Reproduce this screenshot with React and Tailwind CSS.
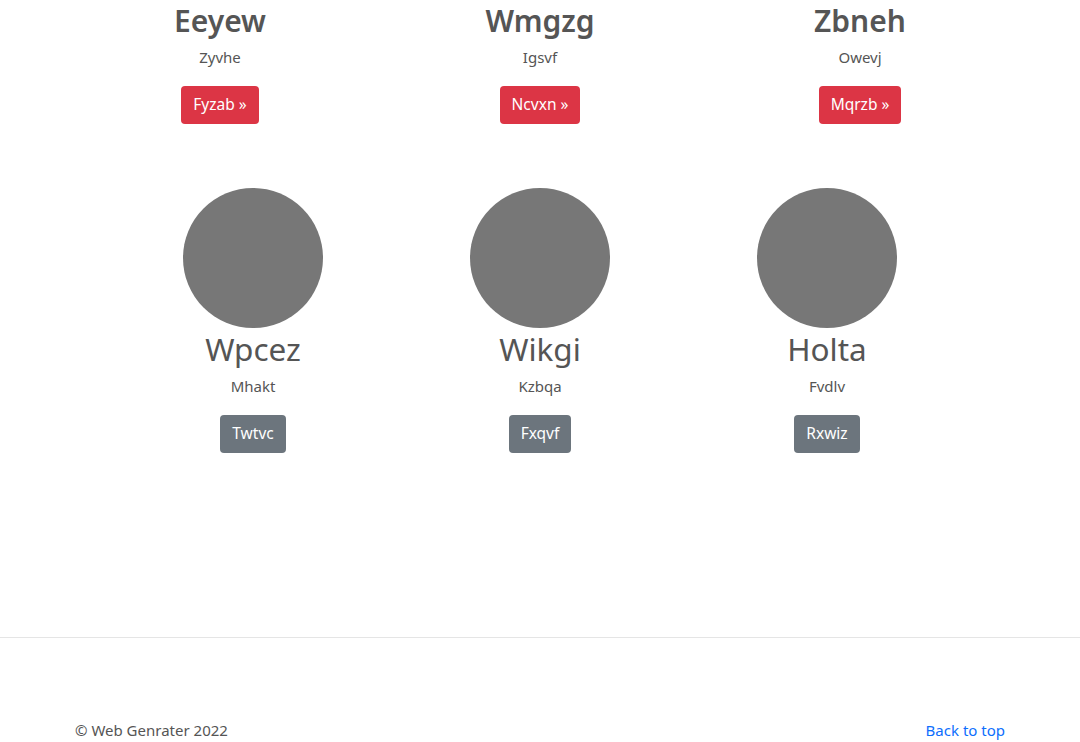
const featured = [
  { title: 'Eeyew', sub: 'Zyvhe', btn: 'Fyzab »' },
  { title: 'Wmgzg', sub: 'Igsvf', btn: 'Ncvxn »' },
  { title: 'Zbneh', sub: 'Owevj', btn: 'Mqrzb »' },
]

const people = [
  { name: 'Wpcez', sub: 'Mhakt', btn: 'Twtvc' },
  { name: 'Wikgi', sub: 'Kzbqa', btn: 'Fxqvf' },
  { name: 'Holta', sub: 'Fvdlv', btn: 'Rxwiz' },
]

export default function App() {
  return (
    <div
      className="min-h-screen bg-white text-[#555]"
      style={{ fontFamily: '"Noto Sans", "Open Sans", sans-serif' }}
    >
      {/* Fila superior */}
      <div className="mx-auto grid w-[960px] grid-cols-3">
        {featured.map((f) => (
          <div key={f.title} className="flex flex-col items-center">
            <h2 className="mt-[2px] text-[30px] font-semibold leading-[38px]">{f.title}</h2>
            <p className="mt-[5px] text-[15px] leading-[24px]">{f.sub}</p>
            <button className="mt-[17px] h-[38px] rounded bg-[#dc3545] px-3 text-[15.5px] text-white">
              {f.btn}
            </button>
          </div>
        ))}
      </div>

      {/* Circulos */}
      <div className="mx-auto mt-[64px] grid w-[861px] grid-cols-3">
        {people.map((p) => (
          <div key={p.name} className="flex flex-col items-center">
            <div className="h-[140px] w-[140px] rounded-full bg-[#777]" />
            <h2 className="mt-[1px] text-[31.5px] font-normal leading-[40px]">{p.name}</h2>
            <p className="mt-[5px] text-[15px] leading-[24px]">{p.sub}</p>
            <button className="mt-[17px] h-[38px] rounded bg-[#6c757d] px-3 text-[15.5px] text-white">
              {p.btn}
            </button>
          </div>
        ))}
      </div>

      <hr className="mt-[184px] border-t border-[#e5e5e5]" />

      <footer className="mx-auto flex w-[930px] items-center justify-between pt-[80px] text-[15px] leading-[24px]">
        <p>© Web Genrater 2022</p>
        <a href="#" className="text-[#0d6efd]">Back to top</a>
      </footer>
    </div>
  )
}
